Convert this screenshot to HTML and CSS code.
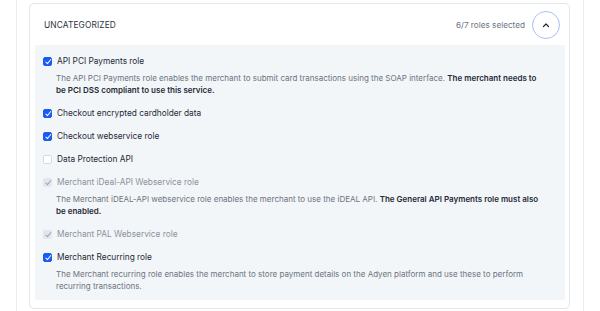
FILE: index.html
```html
<!DOCTYPE html>
<html lang="en">
<head>
    <meta charset="UTF-8">
    <meta name="viewport" content="width=device-width, initial-scale=1.0">
    <title>Roles</title>
    <link rel="stylesheet" href="styles.css">
</head>
<body>
    <div class="page">
        <section class="group">
            <header class="group-head">
                <h2>UNCATEGORIZED</h2>
                <div class="group-meta">
                    <span class="count">6/7 roles selected</span>
                    <button class="toggle" aria-label="Collapse">
                        <svg width="8" height="6" viewBox="0 0 8 6"><path d="M1.5 4.5 L4 2 L6.5 4.5" fill="none" stroke="#1f2a37" stroke-width="1.2" stroke-linecap="round" stroke-linejoin="round"/></svg>
                    </button>
                </div>
            </header>
            <div class="roles">
                <div class="role">
                    <label><span class="box checked"></span>API PCI Payments role</label>
                    <p>The API PCI Payments role enables the merchant to submit card transactions using the SOAP interface. <b>The merchant needs to be PCI DSS compliant to use this service.</b></p>
                </div>
                <div class="role">
                    <label><span class="box checked"></span>Checkout encrypted cardholder data</label>
                </div>
                <div class="role">
                    <label><span class="box checked"></span>Checkout webservice role</label>
                </div>
                <div class="role">
                    <label><span class="box"></span>Data Protection API</label>
                </div>
                <div class="role disabled">
                    <label><span class="box checked"></span>Merchant iDeal-API Webservice role</label>
                    <p>The Merchant iDEAL-API webservice role enables the merchant to use the iDEAL API. <b>The General API Payments role must also be enabled.</b></p>
                </div>
                <div class="role disabled">
                    <label><span class="box checked"></span>Merchant PAL Webservice role</label>
                </div>
                <div class="role">
                    <label><span class="box checked"></span>Merchant Recurring role</label>
                    <p>The Merchant recurring role enables the merchant to store payment details on the Adyen platform and use these to perform recurring transactions.</p>
                </div>
            </div>
        </section>
    </div>
</body>
</html>
```

FILE: styles.css
```css
* {
    margin: 0;
    padding: 0;
    box-sizing: border-box;
}
body {
    font-family: Inter, "Noto Sans", sans-serif;
    background: #fff;
    color: #1f2a37;
}
.page {
    margin: 0 16px;
    height: 311px;
    padding: 3px 13px 0 12px;
    border-left: 1px solid #ececee;
    border-right: 1px solid #ececee;
}
.group {
    border: 1px solid #e4e7eb;
    border-radius: 5px;
    padding: 0 4px 8px 5px;
}
.group-head {
    height: 41px;
    display: flex;
    align-items: center;
    justify-content: space-between;
    padding: 0 5px 0 9px;
}
.group-head h2 {
    font-size: 8.4px;
    font-weight: 400;
    letter-spacing: 0.1px;
    color: #2b3440;
}
.group-meta {
    display: flex;
    align-items: center;
    gap: 7px;
}
.count {
    font-size: 8.2px;
    color: #6b7480;
}
.toggle {
    width: 28px;
    height: 28px;
    border-radius: 50%;
    border: 1px solid #a8c0f6;
    background: #fff;
    display: flex;
    align-items: center;
    justify-content: center;
}
.roles {
    background: #f3f6f9;
    padding: 10px 15px 8px 8px;
}
.role {
    margin-bottom: 11px;
}
.role:last-child {
    margin-bottom: 0;
}
.role label {
    display: flex;
    align-items: center;
    gap: 5px;
    font-size: 8.3px;
    line-height: 12px;
    color: #1f2a37;
}
.box {
    width: 9px;
    height: 9px;
    border-radius: 2px;
    border: 1px solid #d5dae0;
    background: #fff;
    position: relative;
}
.box.checked {
    background: #1a5cf0;
    border-color: #1a5cf0;
}
.box.checked::after {
    content: "";
    position: absolute;
    left: 2.5px;
    top: 0.5px;
    width: 2px;
    height: 4.5px;
    border: solid #fff;
    border-width: 0 1.2px 1.2px 0;
    transform: rotate(40deg);
}
.role p {
    margin-top: 6px;
    padding-left: 13px;
    font-size: 8px;
    line-height: 11.5px;
    color: #6b7480;
    max-width: 500px;
}
.role p b {
    font-weight: 600;
    color: #1f2a37;
}
.role.disabled label {
    color: #8a929d;
}
.role.disabled .box.checked {
    background: #e3e6ea;
    border-color: #e3e6ea;
}
.role.disabled .box.checked::after {
    border-color: #9aa1ab;
}
```
